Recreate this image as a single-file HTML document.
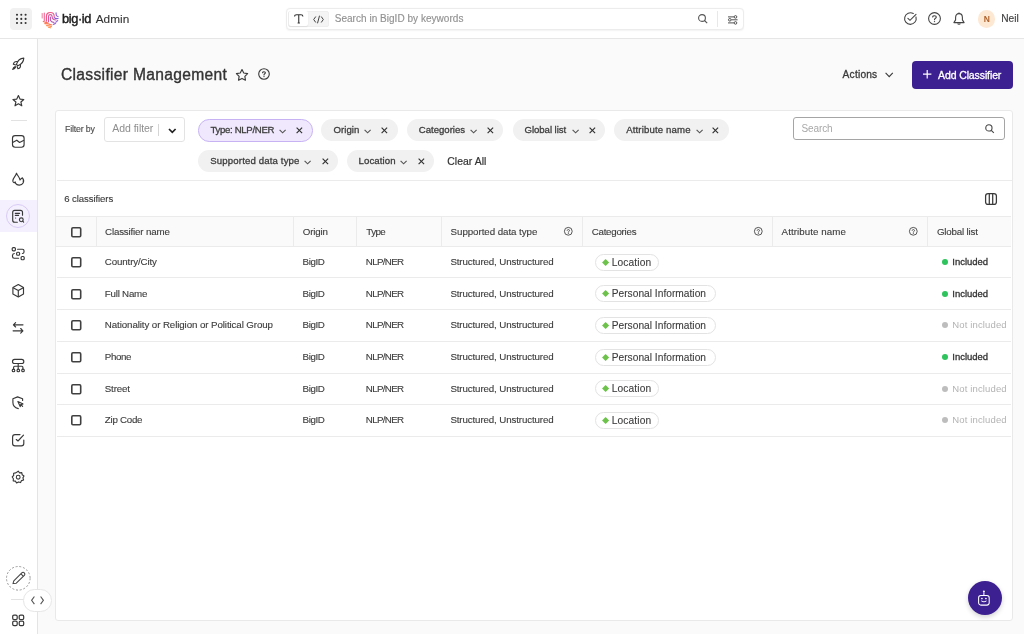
<!DOCTYPE html>
<html><head><meta charset="utf-8">
<style>
*{box-sizing:border-box;margin:0;padding:0}
html,body{width:1024px;height:634px;overflow:hidden;background:#fafafa;font-family:"Liberation Sans",sans-serif;color:#333}
#wrap{position:absolute;left:0;top:0;width:1024px;height:634px;will-change:transform}
.a{position:absolute}
.t{position:absolute;white-space:nowrap;line-height:14px}
.sb{-webkit-text-stroke-width:0.3px}
svg{position:absolute;overflow:visible}
.cb{position:absolute;width:10.6px;height:10.6px;border:2px solid #3f3f3f;border-radius:1.2px}
</style></head><body><div id="wrap">
<div class="a" style="left:0;top:0;width:1024px;height:38.5px;background:#fff;border-bottom:1px solid #e6e6e6"></div>
<div class="a" style="left:10px;top:8px;width:22px;height:22px;background:#f1f1f1;border-radius:4px"></div>
<svg style="left:0;top:0" width="1" height="1"><g fill="#333"><circle cx="17" cy="14.8" r="1.05"/><circle cx="21.3" cy="14.8" r="1.05"/><circle cx="25.6" cy="14.8" r="1.05"/><circle cx="17" cy="18.9" r="1.05"/><circle cx="21.3" cy="18.9" r="1.05"/><circle cx="25.6" cy="18.9" r="1.05"/><circle cx="17" cy="23" r="1.05"/><circle cx="21.3" cy="23" r="1.05"/><circle cx="25.6" cy="23" r="1.05"/></g></svg>
<svg style="left:41px;top:11px" width="18" height="17" viewBox="0 0 18 17">
  <g fill="none" stroke-width="1.15" stroke-linecap="round">
    <path d="M1.2 2.6 V7" stroke="#f48aab"/>
    <path d="M3.3 2 V9.6" stroke="#f26d95"/>
    <path d="M5.4 10.2 V5.4 C5.4 3.2 7.1 1.5 9.3 1.5 C11.5 1.5 13.2 3.2 13.2 5.4 V6" stroke="#ef5a88"/>
    <path d="M7.5 10.8 V5.6 C7.5 4.5 8.3 3.7 9.3 3.7 C10.3 3.7 11.1 4.5 11.1 5.6 C11.1 7.6 12.6 9 15 9" stroke="#d45a9e"/>
    <path d="M9.4 6 V9.2 C10 10.6 11.4 11.4 13 11.3" stroke="#b65cb5"/>
    <path d="M15.1 1.8 V3.2 C15.1 4.6 15.9 5.5 17.2 5.7" stroke="#8e62dc"/>
    <path d="M13.3 6.6 C14 7.4 15.6 7.7 17.1 7.5" stroke="#8a60da"/>
    <path d="M14.8 11.2 C15.6 10.8 16.3 10.2 16.7 9.5" stroke="#8f66d8"/>
    <path d="M12.3 13.4 C13.2 13.2 14 12.8 14.6 12.3" stroke="#9a6ad6"/>
    <path d="M2.3 10.4 C3.6 11 5 11.5 6.6 11.9" stroke="#ff6d55"/>
    <path d="M3.8 12.6 C6 12.6 8.6 13.1 10.8 14" stroke="#ff7a4e"/>
    <path d="M5.6 14.6 C7.3 14.6 9 14.9 10.4 15.5" stroke="#ff8a52"/>
    <path d="M7.6 16.4 C8.3 16.3 9 16.5 9.7 16.8" stroke="#ff9a5c"/>
  </g>
</svg>
<div class="t" style="left:62.00px;top:12px;font-size:12.8px;color:#222;letter-spacing:-0.400px;-webkit-text-stroke-width:0.45px;">big·id</div>
<div class="t" style="left:95.70px;top:12px;font-size:11.8px;color:#333;letter-spacing:0.050px;-webkit-text-stroke-width:0.1px;">Admin</div>
<div class="a" style="left:285.5px;top:7.8px;width:458px;height:22px;border:1px solid #ececec;border-radius:4px;background:#fff;box-shadow:0 0.5px 1.5px rgba(0,0,0,.05)"></div>
<div class="a" style="left:288px;top:10.7px;width:40.5px;height:16.6px;border:1px solid #eeeeee;border-radius:2px;background:#f4f4f4"></div>
<div class="a" style="left:288.7px;top:11px;width:19px;height:15.2px;background:#fff;border-radius:2px;box-shadow:0 1px 1.5px rgba(0,0,0,.08)"></div>
<svg style="left:294px;top:14.3px" width="10" height="10" viewBox="0 0 10 10"><g fill="none" stroke="#333" stroke-width="1.1"><path d="M0.6 2.6 C0.6 1.3 1.3 0.7 2.6 0.7 H7 C8.3 0.7 8.9 1.3 8.9 2.6 M4.75 0.7 V9 M3.6 9 H5.9"/></g></svg>
<svg style="left:312.5px;top:14.8px" width="11" height="9" viewBox="0 0 11 9"><g fill="none" stroke="#444" stroke-width="1"><path d="M2.8 1.5 L0.7 4.5 L2.8 7.5"/><path d="M8.2 1.5 L10.3 4.5 L8.2 7.5"/><path d="M6.5 0.7 L4.5 8.3"/></g></svg>
<div class="t" style="left:334.70px;top:12px;font-size:10px;color:#929292;letter-spacing:0.035px;-webkit-text-stroke-width:0.15px;">Search in BigID by keywords</div>
<svg style="left:698.3px;top:14px" width="10" height="10" viewBox="0 0 10 10"><g fill="none" stroke="#555" stroke-width="1.1"><circle cx="4" cy="4" r="3.4"/><path d="M6.5 6.5 L9.2 9.2"/></g></svg>
<div class="a" style="left:717px;top:11px;width:1px;height:16px;background:#e8e8e8"></div>
<svg style="left:728px;top:14.5px" width="10" height="10" viewBox="0 0 10 10"><g fill="none" stroke="#505050" stroke-width="1"><path d="M0 1.9 H6"/><circle cx="7.5" cy="1.9" r="1.3"/><circle cx="1.8" cy="4.8" r="1.3"/><path d="M3.3 4.8 H9.6"/><path d="M0 7.9 H6"/><circle cx="7.5" cy="7.9" r="1.3"/></g></svg>
<svg style="left:904px;top:12.3px" width="13" height="13" viewBox="0 0 13 13"><g fill="none" stroke="#444" stroke-width="1.1" stroke-linecap="round"><path d="M12 5 A5.8 5.8 0 1 1 9.3 1.5"/><path d="M3.9 6.3 L6 8.3 L12 2.3"/></g></svg>
<svg style="left:928px;top:12.3px" width="13" height="13" viewBox="0 0 13 13"><g fill="none" stroke="#444" stroke-width="1.1"><circle cx="6.5" cy="6.5" r="5.9"/><path d="M4.7 5 C4.7 3.3 8.3 3.3 8.3 5 C8.3 6.3 6.5 6.3 6.5 7.7" stroke-linecap="round"/></g><circle cx="6.5" cy="9.6" r=".7" fill="#444"/></svg>
<svg style="left:952.5px;top:12px" width="12" height="13" viewBox="0 0 12 13"><g fill="none" stroke="#444" stroke-width="1.1" stroke-linejoin="round"><path d="M6 1.6 C3.6 1.6 2.6 3.5 2.6 5.5 V7.9 L0.9 10.6 H11.1 L9.4 7.9 V5.5 C9.4 3.5 8.4 1.6 6 1.6Z"/><path d="M4.6 11.6 C5.1 12.5 6.9 12.5 7.4 11.6"/><path d="M6 0.4 V1.6"/></g></svg>
<div class="a" style="left:978px;top:10.4px;width:17.2px;height:17.2px;border-radius:50%;background:#fde8d4"></div>
<div class="t" style="left:983.70px;top:12px;font-size:8.5px;color:#b0622a;font-weight:700;">N</div>
<div class="t" style="left:1001.30px;top:12px;font-size:10.2px;color:#444;letter-spacing:-0.033px;-webkit-text-stroke-width:0.15px;">Neil</div>
<div class="a" style="left:0;top:38.5px;width:38px;height:596px;background:#fff;border-right:1px solid #e4e4e4"></div>
<div class="a" style="left:0;top:200px;width:37px;height:31.6px;background:#f4f0fd"></div>
<div class="a" style="left:6px;top:204px;width:24.3px;height:24.3px;border-radius:50%;border:1px solid #d8cbf6"></div>
<div class="a" style="left:11px;top:120px;width:15.5px;height:1px;background:#e2e2e2"></div>
<!-- SIDEICONS -->
<svg style="left:8px;top:54px" width="20" height="20" viewBox="0 0 20 20"><g fill="none" stroke="#383838" stroke-width="1.1" stroke-linejoin="round" stroke-linecap="round"><path d="M15.8 4.1 C12.2 4.3 9.6 6.6 8.4 10.3 L9.8 11.7 C13.5 10.5 15.6 8 15.8 4.1Z"/><path d="M9.3 7.6 C7.4 7.2 5.9 8.2 5.3 10.2 L7.8 11"/><path d="M12.4 10.8 C12.8 12.6 11.8 14.2 9.9 14.8 L9.1 12.3"/><path d="M7.2 12.4 C5.8 12.9 5 14 4.7 15.4 C6.1 15.1 7.2 14.3 7.7 13"/></g></svg>
<svg style="left:8px;top:90.5px" width="20" height="20" viewBox="0 0 20 20"><path d="M10.4 4.6 L12 8.1 L15.8 8.5 L12.9 11 L13.8 14.8 L10.4 12.8 L7 14.8 L7.9 11 L5 8.5 L8.8 8.1Z" fill="none" stroke="#383838" stroke-width="1.15" stroke-linejoin="round"/></svg>
<svg style="left:8px;top:131px" width="20" height="20" viewBox="0 0 20 20"><g fill="none" stroke="#383838" stroke-width="1.15" stroke-linejoin="round"><rect x="4.5" y="4.6" width="11.6" height="11.6" rx="2.6"/><path d="M4.6 11.6 L8.8 9.2 L11.6 11.5 L16 9.2"/></g></svg>
<svg style="left:8px;top:169px" width="20" height="20" viewBox="0 0 20 20"><path d="M8.5 4.2 C9.5 6.8 11.6 8.2 12 11 C12.6 10 13.5 9.5 14.4 8.8 C15.6 10.2 16 12.2 15.1 14 C13.6 16.6 9.2 16.8 7.6 14.4 L7.2 12.9 C6.2 14.3 5.1 13.6 4.8 12 C4.5 9.2 8 7.2 8.5 4.2Z" fill="none" stroke="#383838" stroke-width="1.15" stroke-linejoin="round"/></svg>
<svg style="left:8px;top:206px" width="20" height="20" viewBox="0 0 20 20"><g fill="none" stroke="#383838" stroke-width="1.15" stroke-linecap="round"><path d="M14.5 9.2 V6.3 C14.5 5 13.8 4.3 12.5 4.3 H6.7 C5.4 4.3 4.7 5 4.7 6.3 V14.2 C4.7 15.5 5.4 16.2 6.7 16.2 H9.3"/><path d="M7.3 7.3 H11.6 M7.3 9.3 H10.6"/><circle cx="13.3" cy="13.8" r="1.9"/><path d="M14.7 15.2 L15.6 16.1"/></g><circle cx="7.6" cy="12" r=".6" fill="#383838"/></svg>
<svg style="left:8px;top:244px" width="20" height="20" viewBox="0 0 20 20"><g fill="none" stroke="#383838" stroke-width="1.15" stroke-linecap="round"><rect x="4.2" y="3.6" width="3.2" height="3.2" rx="1"/><path d="M9.6 5.2 H14.4 C15.4 5.2 16 5.8 16 6.8 V8 C16 9 15.4 9.5 14.4 9.5"/><rect x="8.6" y="8.2" width="3" height="3" rx="1"/><path d="M6.3 9.5 C5.1 9.6 4.5 10.3 4.5 11.5 V12.6 C4.5 13.7 5.1 14.2 6.1 14.2 H10.6"/><rect x="13.1" y="12.5" width="3.1" height="3.2" rx="1"/></g></svg>
<svg style="left:8px;top:281px" width="20" height="20" viewBox="0 0 20 20"><g fill="none" stroke="#383838" stroke-width="1.15" stroke-linejoin="round"><path d="M10.3 3.6 L15.5 6.6 V13 L10.3 15.9 L4.9 13 V6.6Z"/><path d="M5.1 6.8 L10.3 9.6 L15.3 6.8 M10.3 9.6 V15.7"/></g></svg>
<svg style="left:8px;top:318px" width="20" height="20" viewBox="0 0 20 20"><g fill="none" stroke="#383838" stroke-width="1.15" stroke-linecap="round" stroke-linejoin="round"><path d="M5.6 6.8 H15 M7.6 4.6 L5.4 6.8 L7.6 9"/><path d="M5.1 12.8 H14.8 M12.7 10.5 L14.9 12.8 L12.7 15.1"/></g></svg>
<svg style="left:8px;top:355px" width="20" height="20" viewBox="0 0 20 20"><g fill="none" stroke="#383838" stroke-width="1.15" stroke-linecap="round"><rect x="4.5" y="4.3" width="11.3" height="4.2" rx="2.1"/><path d="M10.2 8.5 V11.2 M5.6 14 V12.3 C5.6 11.6 6 11.2 6.7 11.2 H13.8 C14.5 11.2 14.9 11.6 14.9 12.3 V14 M10.2 11.2 V14"/><circle cx="5.5" cy="15.4" r="1.3"/><circle cx="10.3" cy="15.4" r="1.3"/><circle cx="15" cy="15.4" r="1.3"/></g></svg>
<svg style="left:8px;top:393px" width="20" height="20" viewBox="0 0 20 20"><g fill="none" stroke="#383838" stroke-width="1.15" stroke-linecap="round" stroke-linejoin="round"><path d="M14.6 7.4 V5.8 L9.6 3.9 L4.9 5.8 V9.5 C4.9 12.5 7 14.8 10.3 15.6"/><path d="M9.9 8.5 L15 10.9 L12.9 11.6 L12.2 13.6Z"/><path d="M12.9 11.6 L14.6 13.3"/></g></svg>
<svg style="left:8px;top:430px" width="20" height="20" viewBox="0 0 20 20"><g fill="none" stroke="#383838" stroke-width="1.15" stroke-linecap="round" stroke-linejoin="round"><path d="M12 4.6 H7 C5.3 4.6 4.6 5.3 4.6 7 V13.4 C4.6 15.1 5.3 15.8 7 15.8 H13.4 C15.1 15.8 15.8 15.1 15.8 13.4 V10"/><path d="M8.3 9.5 L10 11 L15.5 5.2"/></g></svg>
<svg style="left:8px;top:467px" width="20" height="20" viewBox="0 0 20 20"><g fill="none" stroke="#383838" stroke-width="1.1" stroke-linejoin="round"><path d="M10.2 4.2 L11.6 5.9 L13.8 5.6 L14.2 7.8 L16 9 L14.9 10.9 L15.6 13 L13.5 13.6 L12.6 15.6 L10.5 14.9 L8.6 16 L7.4 14.1 L5.2 13.9 L5.4 11.7 L4.2 10 L5.7 8.4 L5.6 6.2 L7.8 5.9 Z"/><circle cx="10.2" cy="10.2" r="1.9"/></g></svg>
<svg style="left:8px;top:568px" width="20" height="20" viewBox="0 0 20 20"><g fill="none" stroke="#444" stroke-width="1.05" stroke-linejoin="round"><path d="M5 15.6 L5.8 12.8 L13.8 4.8 C14.5 4.1 15.7 4.1 16.3 4.8 C17 5.5 17 6.6 16.3 7.3 L8.3 15.2 Z"/><path d="M12.9 5.9 L15.2 8.2"/></g></svg>
<svg style="left:8px;top:611px" width="20" height="20" viewBox="0 0 20 20"><g fill="none" stroke="#383838" stroke-width="1.2"><rect x="4.7" y="4.1" width="4.5" height="4.4" rx="1.3"/><rect x="11.2" y="4.1" width="4.5" height="4.4" rx="1.3"/><rect x="4.7" y="10.2" width="4.5" height="4.4" rx="1.3"/><rect x="11.2" y="10.2" width="4.5" height="4.4" rx="1.3"/></g></svg>
<!-- ENDSIDEICONS -->

<svg style="left:6px;top:566px" width="25" height="25" viewBox="0 0 25 25"><circle cx="12.3" cy="12.3" r="11.8" fill="none" stroke="#9a9a9a" stroke-width="1" stroke-dasharray="2 1.75"/></svg>
<div class="a" style="left:10.7px;top:599px;width:13px;height:1px;background:#e2e2e2"></div>
<div class="a" style="left:23.3px;top:589.3px;width:28.3px;height:22.6px;border-radius:11.3px;background:#fff;border:1px solid #e6e6e6"></div>
<svg style="left:30.9px;top:596px" width="13" height="9" viewBox="0 0 13 9"><g fill="none" stroke="#555" stroke-width="1.1"><path d="M3.4 0.5 L0.6 4.3 L3.4 8.1"/><path d="M9.6 0.5 L12.4 4.3 L9.6 8.1"/></g></svg>
<div class="t" style="left:61.00px;top:68px;font-size:15.6px;color:#333;letter-spacing:0.320px;-webkit-text-stroke-width:0.35px;">Classifier Management</div>
<svg style="left:236px;top:68.5px" width="12" height="12" viewBox="0 0 12 12"><path d="M6.00 0.50 L7.76 3.97 L11.61 4.58 L8.85 7.33 L9.47 11.17 L6.00 9.40 L2.53 11.17 L3.15 7.33 L0.39 4.58 L4.24 3.97Z" fill="none" stroke="#3a3a3a" stroke-width="1.15" stroke-linejoin="round"/></svg>
<svg style="left:258.1px;top:68.1px" width="12" height="12" viewBox="0 0 12 12"><g fill="none" stroke="#3a3a3a" stroke-width="1.1"><circle cx="6" cy="6" r="5.3"/><path d="M4.6 4.8 C4.6 3.4 7.4 3.4 7.4 4.8 C7.4 5.8 6 5.8 6 6.9" stroke-linecap="round"/></g><circle cx="6" cy="8.6" r=".7" fill="#3a3a3a"/></svg>
<div class="t" style="left:842.60px;top:68px;font-size:10.2px;color:#3a3a3a;letter-spacing:0.200px;-webkit-text-stroke-width:0.3px;">Actions</div>
<svg style="left:884.7px;top:72.3px" width="9" height="6" viewBox="0 0 9 6"><path d="M0.6 0.8 L4.2 4.6 L7.8 0.8" fill="none" stroke="#3a3a3a" stroke-width="1.1"/></svg>
<div class="a" style="left:912px;top:60.8px;width:101px;height:28px;background:#3c1f91;border-radius:4px"></div>
<svg style="left:922.5px;top:70.2px" width="9" height="9" viewBox="0 0 9 9"><path d="M4.2 0 V8.4 M0 4.2 H8.4" stroke="#fff" stroke-width="1.2"/></svg>
<div class="t" style="left:938.00px;top:68px;font-size:10.5px;color:#fff;letter-spacing:-0.108px;-webkit-text-stroke-width:0.3px;">Add Classifier</div>
<div class="a" style="left:55.15px;top:110.4px;width:957.75px;height:510.2px;background:#fff;border:1px solid #e9e9e9;border-radius:3px"></div>
<div class="t" style="left:65.00px;top:122px;font-size:8.8px;color:#4a4a4a;letter-spacing:-0.163px;-webkit-text-stroke-width:0.12px;">Filter by</div>
<div class="a" style="left:104px;top:117.2px;width:81.3px;height:24.5px;border:1px solid #e3e3e3;border-radius:3px;background:#fff"></div>
<div class="t" style="left:112.30px;top:121px;font-size:10.5px;color:#8e8e8e;letter-spacing:-0.044px;">Add filter</div>
<div class="a" style="left:157.9px;top:124.2px;width:1px;height:11.5px;background:#d5d5d5"></div>
<svg style="left:167.8px;top:127.8px" width="9" height="6" viewBox="0 0 9 6"><path d="M1 1 L4.3 4.3 L7.6 1" fill="none" stroke="#222" stroke-width="1.7"/></svg>
<div class="a" style="left:198.2px;top:119.2px;width:114.8px;height:22.5px;border-radius:11.2px;background:#f0e9fd;border:1px solid #c7b3f4"></div>
<div class="t" style="left:210.50px;top:123px;font-size:9.6px;color:#3d3d3d;letter-spacing:-0.317px;-webkit-text-stroke-width:0.3px;">Type: NLP/NER</div>
<svg style="left:279.0px;top:128.8px" width="8" height="5" viewBox="0 0 8 5"><path d="M0.6 0.8 L3.6 3.8 L6.6 0.8" fill="none" stroke="#555" stroke-width="1.15"/></svg>
<svg style="left:295.6px;top:126.8px" width="7" height="7" viewBox="0 0 7 7"><path d="M0.6 0.6 L6.1 6.1 M6.1 0.6 L0.6 6.1" fill="none" stroke="#333" stroke-width="1.15"/></svg>
<div class="a" style="left:321.3px;top:119.2px;width:77.0px;height:22.3px;border-radius:11.2px;background:#f1f1f1"></div>
<div class="t" style="left:333.40px;top:123px;font-size:9.6px;color:#3d3d3d;letter-spacing:0.080px;-webkit-text-stroke-width:0.3px;">Origin</div>
<svg style="left:364.3px;top:128.8px" width="8" height="5" viewBox="0 0 8 5"><path d="M0.6 0.8 L3.6 3.8 L6.6 0.8" fill="none" stroke="#555" stroke-width="1.15"/></svg>
<svg style="left:381.3px;top:126.8px" width="7" height="7" viewBox="0 0 7 7"><path d="M0.6 0.6 L6.1 6.1 M6.1 0.6 L0.6 6.1" fill="none" stroke="#333" stroke-width="1.15"/></svg>
<div class="a" style="left:407.0px;top:119.2px;width:96.4px;height:22.3px;border-radius:11.2px;background:#f1f1f1"></div>
<div class="t" style="left:418.80px;top:123px;font-size:9.6px;color:#3d3d3d;letter-spacing:-0.011px;-webkit-text-stroke-width:0.3px;">Categories</div>
<svg style="left:470.0px;top:128.8px" width="8" height="5" viewBox="0 0 8 5"><path d="M0.6 0.8 L3.6 3.8 L6.6 0.8" fill="none" stroke="#555" stroke-width="1.15"/></svg>
<svg style="left:486.7px;top:126.8px" width="7" height="7" viewBox="0 0 7 7"><path d="M0.6 0.6 L6.1 6.1 M6.1 0.6 L0.6 6.1" fill="none" stroke="#333" stroke-width="1.15"/></svg>
<div class="a" style="left:512.5px;top:119.2px;width:92.8px;height:22.3px;border-radius:11.2px;background:#f1f1f1"></div>
<div class="t" style="left:524.50px;top:123px;font-size:9.6px;color:#3d3d3d;letter-spacing:-0.040px;-webkit-text-stroke-width:0.3px;">Global list</div>
<svg style="left:571.6px;top:128.8px" width="8" height="5" viewBox="0 0 8 5"><path d="M0.6 0.8 L3.6 3.8 L6.6 0.8" fill="none" stroke="#555" stroke-width="1.15"/></svg>
<svg style="left:588.7px;top:126.8px" width="7" height="7" viewBox="0 0 7 7"><path d="M0.6 0.6 L6.1 6.1 M6.1 0.6 L0.6 6.1" fill="none" stroke="#333" stroke-width="1.15"/></svg>
<div class="a" style="left:614.0px;top:119.2px;width:115.3px;height:22.3px;border-radius:11.2px;background:#f1f1f1"></div>
<div class="t" style="left:626.20px;top:123px;font-size:9.6px;color:#3d3d3d;letter-spacing:0.146px;-webkit-text-stroke-width:0.3px;">Attribute name</div>
<svg style="left:695.8px;top:128.8px" width="8" height="5" viewBox="0 0 8 5"><path d="M0.6 0.8 L3.6 3.8 L6.6 0.8" fill="none" stroke="#555" stroke-width="1.15"/></svg>
<svg style="left:712.4px;top:126.8px" width="7" height="7" viewBox="0 0 7 7"><path d="M0.6 0.6 L6.1 6.1 M6.1 0.6 L0.6 6.1" fill="none" stroke="#333" stroke-width="1.15"/></svg>
<div class="a" style="left:198.2px;top:150.1px;width:140.1px;height:22.3px;border-radius:11.2px;background:#f1f1f1"></div>
<div class="t" style="left:210.30px;top:154px;font-size:9.6px;color:#3d3d3d;letter-spacing:0.150px;-webkit-text-stroke-width:0.3px;">Supported data type</div>
<svg style="left:304.2px;top:159.7px" width="8" height="5" viewBox="0 0 8 5"><path d="M0.6 0.8 L3.6 3.8 L6.6 0.8" fill="none" stroke="#555" stroke-width="1.15"/></svg>
<svg style="left:321.6px;top:157.7px" width="7" height="7" viewBox="0 0 7 7"><path d="M0.6 0.6 L6.1 6.1 M6.1 0.6 L0.6 6.1" fill="none" stroke="#333" stroke-width="1.15"/></svg>
<div class="a" style="left:346.8px;top:150.1px;width:87.2px;height:22.3px;border-radius:11.2px;background:#f1f1f1"></div>
<div class="t" style="left:358.60px;top:154px;font-size:9.6px;color:#3d3d3d;letter-spacing:0.100px;-webkit-text-stroke-width:0.3px;">Location</div>
<svg style="left:400.2px;top:159.7px" width="8" height="5" viewBox="0 0 8 5"><path d="M0.6 0.8 L3.6 3.8 L6.6 0.8" fill="none" stroke="#555" stroke-width="1.15"/></svg>
<svg style="left:417.6px;top:157.7px" width="7" height="7" viewBox="0 0 7 7"><path d="M0.6 0.6 L6.1 6.1 M6.1 0.6 L0.6 6.1" fill="none" stroke="#333" stroke-width="1.15"/></svg>
<div class="t" style="left:447.30px;top:155px;font-size:10.4px;color:#333;letter-spacing:0.050px;-webkit-text-stroke-width:0.2px;">Clear All</div>
<div class="a" style="left:793.4px;top:117.3px;width:211.6px;height:23px;border:1.3px solid #a5a5a5;border-radius:3px;background:#fff"></div>
<div class="t" style="left:801.40px;top:122px;font-size:10px;color:#a8a8a8;letter-spacing:-0.080px;">Search</div>
<svg style="left:985.4px;top:124.2px" width="9.5" height="9.5" viewBox="0 0 10 10"><g fill="none" stroke="#444" stroke-width="1.15"><circle cx="4.1" cy="4.1" r="3.3"/><path d="M6.6 6.6 L9.3 9.3"/></g></svg>
<div class="a" style="left:56.5px;top:180px;width:955px;height:1px;background:#ebebeb"></div>
<div class="t" style="left:64.30px;top:192px;font-size:9.6px;color:#3a3a3a;letter-spacing:-0.100px;-webkit-text-stroke-width:0.12px;">6 classifiers</div>
<svg style="left:985px;top:193px" width="12" height="12" viewBox="0 0 12 12"><g fill="none" stroke="#3a3a3a" stroke-width="1.25"><rect x="0.6" y="0.6" width="10.8" height="10.8" rx="2.5"/><path d="M4.3 0.6 V11.4 M7.7 0.6 V11.4"/></g></svg>
<div class="a" style="left:56.2px;top:216px;width:955.2px;height:31px;background:#fafafa;border-top:1px solid #ebebeb;border-bottom:1px solid #ebebeb"></div>
<div class="a" style="left:96px;top:217px;width:1px;height:28.8px;background:#ebebeb"></div>
<div class="a" style="left:293px;top:217px;width:1px;height:28.8px;background:#ebebeb"></div>
<div class="a" style="left:356px;top:217px;width:1px;height:28.8px;background:#ebebeb"></div>
<div class="a" style="left:441px;top:217px;width:1px;height:28.8px;background:#ebebeb"></div>
<div class="a" style="left:582px;top:217px;width:1px;height:28.8px;background:#ebebeb"></div>
<div class="a" style="left:772px;top:217px;width:1px;height:28.8px;background:#ebebeb"></div>
<div class="a" style="left:927px;top:217px;width:1px;height:28.8px;background:#ebebeb"></div>
<svg style="left:70.85px;top:226.75px" width="10.5" height="10.5" viewBox="0 0 10.5 10.5"><rect x=".8" y=".8" width="8.9" height="8.9" rx="1.1" fill="none" stroke="#404040" stroke-width="1.6"/></svg>
<div class="t" style="left:105.00px;top:225px;font-size:9.75px;color:#3c3c3c;letter-spacing:-0.164px;-webkit-text-stroke-width:0.12px;">Classifier name</div>
<div class="t" style="left:302.80px;top:225px;font-size:9.75px;color:#3c3c3c;letter-spacing:-0.200px;-webkit-text-stroke-width:0.12px;">Origin</div>
<div class="t" style="left:366.30px;top:225px;font-size:9.75px;color:#3c3c3c;letter-spacing:-0.567px;-webkit-text-stroke-width:0.12px;">Type</div>
<div class="t" style="left:450.60px;top:225px;font-size:9.75px;color:#3c3c3c;letter-spacing:-0.061px;-webkit-text-stroke-width:0.12px;">Supported data type</div>
<div class="t" style="left:591.70px;top:225px;font-size:9.75px;color:#3c3c3c;letter-spacing:-0.256px;-webkit-text-stroke-width:0.12px;">Categories</div>
<div class="t" style="left:781.60px;top:225px;font-size:9.75px;color:#3c3c3c;letter-spacing:0.062px;-webkit-text-stroke-width:0.12px;">Attribute name</div>
<div class="t" style="left:936.90px;top:225px;font-size:9.75px;color:#3c3c3c;letter-spacing:-0.180px;-webkit-text-stroke-width:0.12px;">Global list</div>
<svg style="left:564px;top:227.29999999999998px" width="9" height="9" viewBox="0 0 9 9"><g fill="none" stroke="#444" stroke-width=".9"><circle cx="4.3" cy="4.3" r="3.9"/><path d="M3.1 3.4 C3.1 2.2 5.5 2.2 5.5 3.4 C5.5 4.4 4.3 4.3 4.3 5.3" stroke-linecap="round"/></g><circle cx="4.3" cy="6.6" r=".5" fill="#444"/></svg>
<svg style="left:754.3px;top:227.29999999999998px" width="9" height="9" viewBox="0 0 9 9"><g fill="none" stroke="#444" stroke-width=".9"><circle cx="4.3" cy="4.3" r="3.9"/><path d="M3.1 3.4 C3.1 2.2 5.5 2.2 5.5 3.4 C5.5 4.4 4.3 4.3 4.3 5.3" stroke-linecap="round"/></g><circle cx="4.3" cy="6.6" r=".5" fill="#444"/></svg>
<svg style="left:908.7px;top:227.29999999999998px" width="9" height="9" viewBox="0 0 9 9"><g fill="none" stroke="#444" stroke-width=".9"><circle cx="4.3" cy="4.3" r="3.9"/><path d="M3.1 3.4 C3.1 2.2 5.5 2.2 5.5 3.4 C5.5 4.4 4.3 4.3 4.3 5.3" stroke-linecap="round"/></g><circle cx="4.3" cy="6.6" r=".5" fill="#444"/></svg>
<div class="a" style="left:56.5px;top:277.1px;width:954px;height:1px;background:#ebebeb"></div>
<svg style="left:70.85px;top:256.85px" width="10.5" height="10.5" viewBox="0 0 10.5 10.5"><rect x=".8" y=".8" width="8.9" height="8.9" rx="1.1" fill="none" stroke="#404040" stroke-width="1.6"/></svg>
<div class="t" style="left:104.80px;top:255px;font-size:9.75px;color:#3c3c3c;letter-spacing:-0.136px;-webkit-text-stroke-width:0.12px;">Country/City</div>
<div class="t" style="left:302.50px;top:255px;font-size:9.75px;color:#3c3c3c;letter-spacing:-0.375px;-webkit-text-stroke-width:0.12px;">BigID</div>
<div class="t" style="left:365.80px;top:255px;font-size:9.75px;color:#3c3c3c;letter-spacing:-0.650px;-webkit-text-stroke-width:0.12px;">NLP/NER</div>
<div class="t" style="left:450.40px;top:255px;font-size:9.75px;color:#3c3c3c;letter-spacing:-0.126px;-webkit-text-stroke-width:0.12px;">Structured, Unstructured</div>
<div class="a" style="left:594.5px;top:253.53px;width:64.8px;height:17.2px;border:1px solid #e3e3e3;border-radius:9px;background:#fff"></div>
<div class="a" style="left:602.8px;top:259.53px;width:5.2px;height:5.2px;background:#6cc24a;transform:rotate(45deg)"></div>
<div class="t" style="left:611.70px;top:256px;font-size:10.2px;color:#3c3c3c;letter-spacing:0.129px;-webkit-text-stroke-width:0.1px;">Location</div>
<div class="a" style="left:942px;top:258.83px;width:6px;height:6px;border-radius:3px;background:#2ec35c"></div>
<div class="t" style="left:952.30px;top:255px;font-size:9.5px;color:#333;letter-spacing:-0.029px;-webkit-text-stroke-width:0.3px;">Included</div>
<div class="a" style="left:56.5px;top:308.9px;width:954px;height:1px;background:#ebebeb"></div>
<svg style="left:70.85px;top:288.52px" width="10.5" height="10.5" viewBox="0 0 10.5 10.5"><rect x=".8" y=".8" width="8.9" height="8.9" rx="1.1" fill="none" stroke="#404040" stroke-width="1.6"/></svg>
<div class="t" style="left:104.80px;top:287px;font-size:9.75px;color:#3c3c3c;letter-spacing:-0.225px;-webkit-text-stroke-width:0.12px;">Full Name</div>
<div class="t" style="left:302.50px;top:287px;font-size:9.75px;color:#3c3c3c;letter-spacing:-0.375px;-webkit-text-stroke-width:0.12px;">BigID</div>
<div class="t" style="left:365.80px;top:287px;font-size:9.75px;color:#3c3c3c;letter-spacing:-0.650px;-webkit-text-stroke-width:0.12px;">NLP/NER</div>
<div class="t" style="left:450.40px;top:287px;font-size:9.75px;color:#3c3c3c;letter-spacing:-0.126px;-webkit-text-stroke-width:0.12px;">Structured, Unstructured</div>
<div class="a" style="left:594.5px;top:285.20px;width:121.1px;height:17.2px;border:1px solid #e3e3e3;border-radius:9px;background:#fff"></div>
<div class="a" style="left:602.8px;top:291.20px;width:5.2px;height:5.2px;background:#6cc24a;transform:rotate(45deg)"></div>
<div class="t" style="left:611.70px;top:287px;font-size:10.2px;color:#3c3c3c;letter-spacing:0.016px;-webkit-text-stroke-width:0.1px;">Personal Information</div>
<div class="a" style="left:942px;top:290.50px;width:6px;height:6px;border-radius:3px;background:#2ec35c"></div>
<div class="t" style="left:952.30px;top:287px;font-size:9.5px;color:#333;letter-spacing:-0.029px;-webkit-text-stroke-width:0.3px;">Included</div>
<div class="a" style="left:56.5px;top:340.9px;width:954px;height:1px;background:#ebebeb"></div>
<svg style="left:70.85px;top:320.19px" width="10.5" height="10.5" viewBox="0 0 10.5 10.5"><rect x=".8" y=".8" width="8.9" height="8.9" rx="1.1" fill="none" stroke="#404040" stroke-width="1.6"/></svg>
<div class="t" style="left:104.80px;top:318px;font-size:9.75px;color:#3c3c3c;letter-spacing:-0.100px;-webkit-text-stroke-width:0.12px;">Nationality or Religion or Political Group</div>
<div class="t" style="left:302.50px;top:318px;font-size:9.75px;color:#3c3c3c;letter-spacing:-0.375px;-webkit-text-stroke-width:0.12px;">BigID</div>
<div class="t" style="left:365.80px;top:318px;font-size:9.75px;color:#3c3c3c;letter-spacing:-0.650px;-webkit-text-stroke-width:0.12px;">NLP/NER</div>
<div class="t" style="left:450.40px;top:318px;font-size:9.75px;color:#3c3c3c;letter-spacing:-0.126px;-webkit-text-stroke-width:0.12px;">Structured, Unstructured</div>
<div class="a" style="left:594.5px;top:316.87px;width:121.1px;height:17.2px;border:1px solid #e3e3e3;border-radius:9px;background:#fff"></div>
<div class="a" style="left:602.8px;top:322.87px;width:5.2px;height:5.2px;background:#6cc24a;transform:rotate(45deg)"></div>
<div class="t" style="left:611.70px;top:319px;font-size:10.2px;color:#3c3c3c;letter-spacing:0.016px;-webkit-text-stroke-width:0.1px;">Personal Information</div>
<div class="a" style="left:942px;top:322.17px;width:6px;height:6px;border-radius:3px;background:#bdbdbd"></div>
<div class="t" style="left:952.30px;top:318px;font-size:9.5px;color:#b3b3b3;letter-spacing:0.136px;">Not included</div>
<div class="a" style="left:56.5px;top:372.6px;width:954px;height:1px;background:#ebebeb"></div>
<svg style="left:70.85px;top:351.86px" width="10.5" height="10.5" viewBox="0 0 10.5 10.5"><rect x=".8" y=".8" width="8.9" height="8.9" rx="1.1" fill="none" stroke="#404040" stroke-width="1.6"/></svg>
<div class="t" style="left:104.80px;top:350px;font-size:9.75px;color:#3c3c3c;letter-spacing:-0.400px;-webkit-text-stroke-width:0.12px;">Phone</div>
<div class="t" style="left:302.50px;top:350px;font-size:9.75px;color:#3c3c3c;letter-spacing:-0.375px;-webkit-text-stroke-width:0.12px;">BigID</div>
<div class="t" style="left:365.80px;top:350px;font-size:9.75px;color:#3c3c3c;letter-spacing:-0.650px;-webkit-text-stroke-width:0.12px;">NLP/NER</div>
<div class="t" style="left:450.40px;top:350px;font-size:9.75px;color:#3c3c3c;letter-spacing:-0.126px;-webkit-text-stroke-width:0.12px;">Structured, Unstructured</div>
<div class="a" style="left:594.5px;top:348.54px;width:121.1px;height:17.2px;border:1px solid #e3e3e3;border-radius:9px;background:#fff"></div>
<div class="a" style="left:602.8px;top:354.54px;width:5.2px;height:5.2px;background:#6cc24a;transform:rotate(45deg)"></div>
<div class="t" style="left:611.70px;top:351px;font-size:10.2px;color:#3c3c3c;letter-spacing:0.016px;-webkit-text-stroke-width:0.1px;">Personal Information</div>
<div class="a" style="left:942px;top:353.84px;width:6px;height:6px;border-radius:3px;background:#2ec35c"></div>
<div class="t" style="left:952.30px;top:350px;font-size:9.5px;color:#333;letter-spacing:-0.029px;-webkit-text-stroke-width:0.3px;">Included</div>
<div class="a" style="left:56.5px;top:404.0px;width:954px;height:1px;background:#ebebeb"></div>
<svg style="left:70.85px;top:383.53px" width="10.5" height="10.5" viewBox="0 0 10.5 10.5"><rect x=".8" y=".8" width="8.9" height="8.9" rx="1.1" fill="none" stroke="#404040" stroke-width="1.6"/></svg>
<div class="t" style="left:104.80px;top:382px;font-size:9.75px;color:#3c3c3c;letter-spacing:-0.180px;-webkit-text-stroke-width:0.12px;">Street</div>
<div class="t" style="left:302.50px;top:382px;font-size:9.75px;color:#3c3c3c;letter-spacing:-0.375px;-webkit-text-stroke-width:0.12px;">BigID</div>
<div class="t" style="left:365.80px;top:382px;font-size:9.75px;color:#3c3c3c;letter-spacing:-0.650px;-webkit-text-stroke-width:0.12px;">NLP/NER</div>
<div class="t" style="left:450.40px;top:382px;font-size:9.75px;color:#3c3c3c;letter-spacing:-0.126px;-webkit-text-stroke-width:0.12px;">Structured, Unstructured</div>
<div class="a" style="left:594.5px;top:380.21px;width:64.8px;height:17.2px;border:1px solid #e3e3e3;border-radius:9px;background:#fff"></div>
<div class="a" style="left:602.8px;top:386.21px;width:5.2px;height:5.2px;background:#6cc24a;transform:rotate(45deg)"></div>
<div class="t" style="left:611.70px;top:382px;font-size:10.2px;color:#3c3c3c;letter-spacing:0.129px;-webkit-text-stroke-width:0.1px;">Location</div>
<div class="a" style="left:942px;top:385.51px;width:6px;height:6px;border-radius:3px;background:#bdbdbd"></div>
<div class="t" style="left:952.30px;top:382px;font-size:9.5px;color:#b3b3b3;letter-spacing:0.136px;">Not included</div>
<div class="a" style="left:56.5px;top:435.9px;width:954px;height:1px;background:#ebebeb"></div>
<svg style="left:70.85px;top:415.20px" width="10.5" height="10.5" viewBox="0 0 10.5 10.5"><rect x=".8" y=".8" width="8.9" height="8.9" rx="1.1" fill="none" stroke="#404040" stroke-width="1.6"/></svg>
<div class="t" style="left:104.80px;top:413px;font-size:9.75px;color:#3c3c3c;letter-spacing:-0.271px;-webkit-text-stroke-width:0.12px;">Zip Code</div>
<div class="t" style="left:302.50px;top:413px;font-size:9.75px;color:#3c3c3c;letter-spacing:-0.375px;-webkit-text-stroke-width:0.12px;">BigID</div>
<div class="t" style="left:365.80px;top:413px;font-size:9.75px;color:#3c3c3c;letter-spacing:-0.650px;-webkit-text-stroke-width:0.12px;">NLP/NER</div>
<div class="t" style="left:450.40px;top:413px;font-size:9.75px;color:#3c3c3c;letter-spacing:-0.126px;-webkit-text-stroke-width:0.12px;">Structured, Unstructured</div>
<div class="a" style="left:594.5px;top:411.88px;width:64.8px;height:17.2px;border:1px solid #e3e3e3;border-radius:9px;background:#fff"></div>
<div class="a" style="left:602.8px;top:417.88px;width:5.2px;height:5.2px;background:#6cc24a;transform:rotate(45deg)"></div>
<div class="t" style="left:611.70px;top:414px;font-size:10.2px;color:#3c3c3c;letter-spacing:0.129px;-webkit-text-stroke-width:0.1px;">Location</div>
<div class="a" style="left:942px;top:417.19px;width:6px;height:6px;border-radius:3px;background:#bdbdbd"></div>
<div class="t" style="left:952.30px;top:413px;font-size:9.5px;color:#b3b3b3;letter-spacing:0.136px;">Not included</div>
<div class="a" style="left:967.5px;top:581px;width:34px;height:34px;border-radius:50%;background:#3c1f91;box-shadow:0 2px 5px rgba(0,0,0,.18)"></div>
<svg style="left:978.4px;top:590.3px" width="12" height="16" viewBox="0 0 12 16"><g fill="none" stroke="#fff" stroke-width="1.05"><rect x="0.6" y="5.4" width="10.6" height="9.7" rx="2.3"/><path d="M5.9 2.6 V5.4"/><path d="M3.7 11 C4.7 12.1 7.1 12.1 8.1 11" stroke-linecap="round"/></g><circle cx="5.9" cy="1.6" r="1" fill="#fff"/><circle cx="3.9" cy="8.5" r=".85" fill="#fff"/><circle cx="7.9" cy="8.5" r=".85" fill="#fff"/></svg>
</div></body></html>
